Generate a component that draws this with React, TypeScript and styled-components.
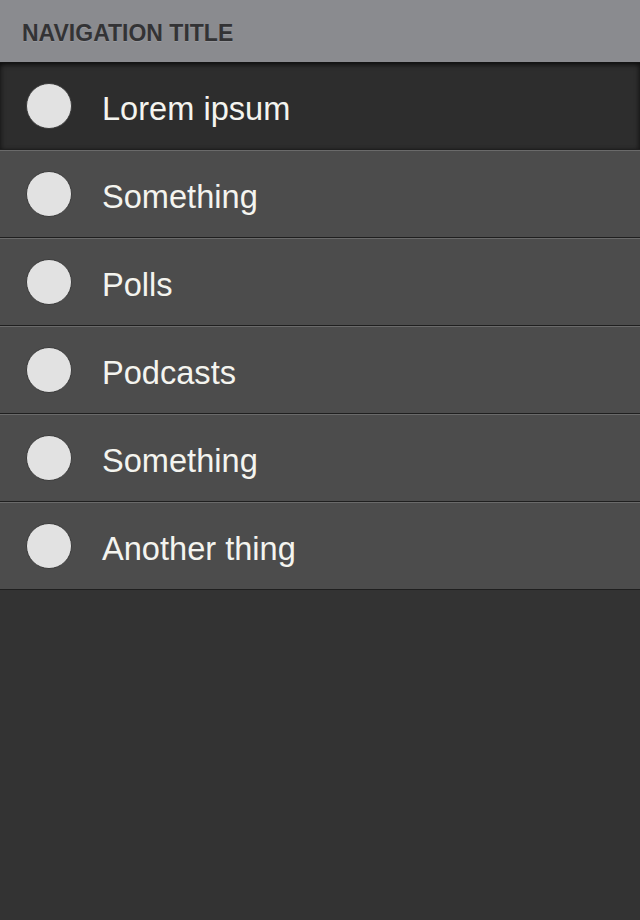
import React from "react";
import styled, { createGlobalStyle } from "styled-components";

const Global = createGlobalStyle`
  html, body { margin: 0; padding: 0; background: #333333; }
  body { font-family: "Liberation Sans", Arial, sans-serif; }
  * { box-sizing: border-box; }
`;

const Page = styled.div`
  width: 640px;
  min-height: 920px;
  background: #333333;
  display: flex;
  flex-direction: column;
`;

const Header = styled.header`
  height: 62px;
  background: #8a8b8f;
  display: flex;
  align-items: center;
  padding: 4px 0 0 22px;
`;

const Title = styled.h1`
  margin: 0;
  font-family: "Liberation Sans", Arial, sans-serif;
  font-weight: 700;
  font-size: 23px;
  color: #333335;
  letter-spacing: 0;
  text-shadow: 0 1px 0 rgba(255, 255, 255, 0.15);
`;

const List = styled.nav`
  display: flex;
  flex-direction: column;
`;

const Row = styled.div<{ $active?: boolean }>`
  height: 88px;
  display: flex;
  align-items: center;
  gap: 30px;
  padding-left: 26px;
  background: ${(p) => (p.$active ? "#2d2d2d" : "#4c4c4c")};
  border-top: 1px solid ${(p) => (p.$active ? "#141414" : "#6a6a6a")};
  border-bottom: 1px solid #1f1f1f;
  box-shadow: ${(p) =>
    p.$active
      ? "inset 0 4px 5px -2px rgba(0,0,0,0.55), inset -3px 0 4px -1px rgba(0,0,0,0.35), inset 3px 0 4px -1px rgba(0,0,0,0.3)"
      : "none"};
`;

const Dot = styled.span`
  width: 46px;
  height: 46px;
  border-radius: 50%;
  background: #e2e2e2;
  border: 1px solid #3a3a3a;
  flex: none;
`;

const Label = styled.span`
  font-family: "Liberation Sans", Arial, sans-serif;
  font-size: 32.6px;
  color: #f4f4ef;
  line-height: 1;
  margin-top: 7px;
`;

const items = ["Lorem ipsum", "Something", "Polls", "Podcasts", "Something", "Another thing"];

export default function App() {
  return (
    <>
      <Global />
      <Page>
        <Header>
          <Title>NAVIGATION TITLE</Title>
        </Header>
        <List>
          {items.map((t, i) => (
            <Row key={i} $active={i === 0}>
              <Dot />
              <Label>{t}</Label>
            </Row>
          ))}
        </List>
      </Page>
    </>
  );
}
